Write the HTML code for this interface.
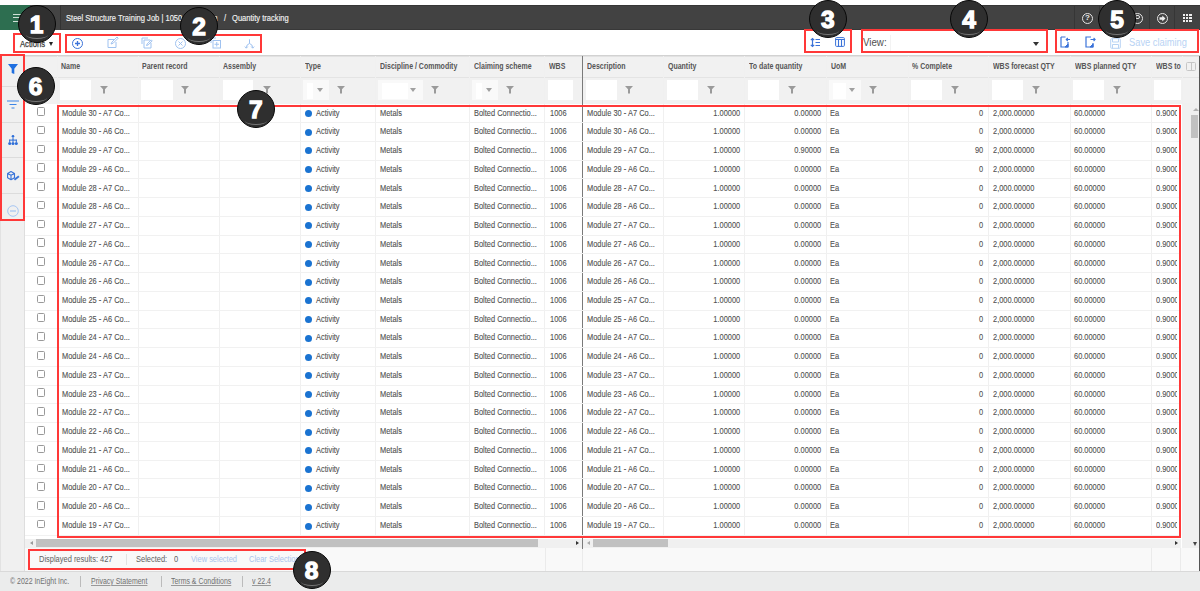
<!DOCTYPE html>
<html><head><meta charset="utf-8"><style>
html,body{margin:0;padding:0;width:1200px;height:591px;overflow:hidden;background:#fff;position:relative;font-family:"Liberation Sans",sans-serif}
div{position:absolute;box-sizing:border-box}
#top{left:0;top:5.3px;width:1200px;height:24.9px;background:#424242;border-top:1px solid #363636;border-bottom:1px solid #383838}
#logo{left:0;top:5px;width:30px;height:25px;background:#2d6e50}
#logo2{left:30px;top:5px;width:30.5px;height:25px;background:#444}
.vd{width:1px;background:#333}
#ham{left:13px;top:14px;width:8px;height:9px}
#ham i{display:block;position:relative;height:1.1px;background:#cfe0d6;margin-bottom:2.2px}
.hi{width:11px;height:11px;border:1.2px solid #e6e6e6;border-radius:50%}
.hi span{position:absolute;left:0;right:0;top:-1px;text-align:center;font:bold 8px "Liberation Sans";color:#eee}
.hi b{position:absolute;left:2px;top:2.5px;width:5px;height:4px;background:#eee}
#appgrid{left:1182.5px;top:13px;width:9px;height:9px}
#appgrid i{float:left;width:2.2px;height:2.2px;margin:0 .8px .8px 0;background:#eee}
.tt{font-size:9px;color:#f2f2f2;-webkit-text-stroke:0.15px #f2f2f2;white-space:nowrap;transform:scaleX(.84);transform-origin:0 0}
.tb{font-size:9px;color:#383838;-webkit-text-stroke:0.25px #383838;white-space:nowrap;transform:scaleX(.85);transform-origin:0 0}
.tv{font-size:11.3px;color:#505050;white-space:nowrap;transform:scaleX(.86);transform-origin:0 0}
.ts{font-size:10px;color:#b8d3f4;white-space:nowrap;transform:scaleX(.93);transform-origin:0 0}
.tri{width:0;height:0;border-left:2.5px solid transparent;border-right:2.5px solid transparent;border-top:4px solid #333}
.tri.g{border-top-color:#a0a0a0;border-left-width:3px;border-right-width:3px;border-top-width:4.3px}
.tri.l{border-top:2.5px solid transparent;border-bottom:2.5px solid transparent;border-right:3px solid #999;border-left:0}
.tri.rr{border-top:2.5px solid transparent;border-bottom:2.5px solid transparent;border-left:3px solid #333;border-right:0}
.tri.up{border-top:0;border-bottom:3px solid #b0b0b0;border-left-width:3px;border-right-width:3px}
#grid{left:25px;top:55.5px;width:1175px;height:515px;background:#fff;border-right:1.5px solid #555}
#side{left:0;top:55.5px;width:25px;height:515px;background:#f0f0f0;border-right:1px solid #dedede;border-left:1px solid #e2e2e2}
.sd{left:2px;width:21px;height:1px;background:#dcdcdc}
#hdr{left:25px;top:54.8px;width:1175px;height:49px;background:#f1f1f1;border-top:1px solid #d2d2d2;box-shadow:inset 0 1px 0 #e2e2e2}
#hdr:after{content:"";position:absolute;left:0;right:0;top:21px;height:1px;background:#e4e4e4}
.cl{width:1px;background:#f0f0f0}
#frz{left:581.5px;top:55.5px;width:1.3px;height:493px;background:#7a7a7a}
.rl{left:25px;width:1156px;height:1px;background:#f1f1f1}
.th{font-size:8.7px;font-weight:bold;color:#555;white-space:nowrap;transform:scaleX(.805);transform-origin:0 0}
.fi{top:80px;height:19.7px;background:#fff}
.fd{top:79.8px;height:20px;background:#f9f9f9}
.td{font-size:9.2px;color:#505050;-webkit-text-stroke:0.1px #505050;white-space:nowrap;transform:scaleX(.81);transform-origin:0 0}
.td.r{transform-origin:100% 0}
.cb{left:36.5px;width:8.6px;height:8.6px;border:1.1px solid #999;border-radius:1.5px;background:#fff}
.dot{left:305.2px;width:7px;height:7px;border-radius:50%;background:#1a73d1}
.hs{top:538.5px;height:9.5px;background:#f0f0f0}
.hth{top:538.8px;height:8px;background:#c1c1c1}
#vthumb{left:1190.5px;top:114.7px;width:7.5px;height:23px;background:#c1c1c1}
#rb{left:1198.5px;top:55.5px;width:1.5px;height:515px;background:#555}
.sep{width:1px;background:#e2e2e2}
.tst{font-size:9px;color:#606060;white-space:nowrap;transform:scaleX(.83);transform-origin:0 0}
#foot{left:0;top:570.7px;width:1200px;height:21px;background:#ebecec;border-top:1px solid #d9d9d9}
.tf{font-size:8.8px;color:#707070;white-space:nowrap;transform:scaleX(.79);transform-origin:0 0}
.u{text-decoration:underline;text-decoration-color:#999}
.num{width:38.0px;height:38.0px;border-radius:50%;background:#2f2f2f;border:1.6px solid #080808;z-index:10}
.num:after{content:"";position:absolute;left:7px;right:7px;bottom:2.5px;height:7px;border-radius:50%;border-bottom:1.7px solid #747474}
.num span{position:absolute;left:0;right:0;top:50%;transform:translateY(-43%);text-align:center;font:bold 24.5px "Liberation Sans",sans-serif;color:#fff;line-height:1;-webkit-text-stroke:1.3px #fff}
.rb{border:2.3px solid #ff3838;z-index:9}
</style></head><body>
<div id="top"></div><div id="logo"></div><div id="logo2"></div><div class="vd" style="left:60px;top:5px;height:25px"></div>
<div id="ham"><i></i><i></i><i></i></div>
<div class="tt" style="left:65.6px;top:12.6px;">Steel Structure Training Job | 1050</div>
<div class="tt" style="left:196px;top:12.6px;">Admin</div>
<div class="tt" style="left:223.5px;top:12.6px;">/</div>
<div class="tt" style="left:232px;top:12.6px;">Quantity tracking</div>
<div class="vd" style="left:1074px;top:5px;height:25px;background:#363636"></div>
<div class="vd" style="left:1099px;top:5px;height:25px;background:#363636"></div>
<div class="vd" style="left:1124px;top:5px;height:25px;background:#363636"></div>
<div class="vd" style="left:1149px;top:5px;height:25px;background:#363636"></div>
<div class="vd" style="left:1174px;top:5px;height:25px;background:#363636"></div>
<div class="hi" style="left:1082px;top:12.5px"><span>?</span></div>
<div class="hi" style="left:1132px;top:12.5px"></div><div style="left:1135.3px;top:14.6px;width:4.4px;height:4.4px;border:1.1px solid #e6e6e6;border-radius:50%"></div>
<div class="hi" style="left:1157px;top:12.5px"></div><svg style="position:absolute;left:1159px;top:14.5px" width="7" height="7" viewBox="0 0 7 7"><path d="M0.5 2.3h2.8V0.6L6.5 3.5 3.3 6.4V4.7H0.5z" fill="#eee"/></svg>
<div style="left:1183.0px;top:13.5px;width:2.3px;height:2.3px;background:#eee"></div><div style="left:1186.2px;top:13.5px;width:2.3px;height:2.3px;background:#eee"></div><div style="left:1189.4px;top:13.5px;width:2.3px;height:2.3px;background:#eee"></div><div style="left:1183.0px;top:16.7px;width:2.3px;height:2.3px;background:#eee"></div><div style="left:1186.2px;top:16.7px;width:2.3px;height:2.3px;background:#eee"></div><div style="left:1189.4px;top:16.7px;width:2.3px;height:2.3px;background:#eee"></div><div style="left:1183.0px;top:19.9px;width:2.3px;height:2.3px;background:#eee"></div><div style="left:1186.2px;top:19.9px;width:2.3px;height:2.3px;background:#eee"></div><div style="left:1189.4px;top:19.9px;width:2.3px;height:2.3px;background:#eee"></div>
<div class="tb" style="left:19.8px;top:38.6px;">Actions</div>
<div class="tri" style="left:49px;top:41.7px;border-left-width:2.6px;border-right-width:2.6px;border-top-width:4px;border-top-color:#222"></div>
<svg style="position:absolute;left:72px;top:37.5px;overflow:visible" width="11" height="11" viewBox="0 0 11 11" fill="none" stroke="#3b73d9" stroke-width="1"><circle cx="5.5" cy="5.5" r="5"/><path d="M5.5 3v5M3 5.5h5" stroke-width="1.3"/></svg>
<svg style="position:absolute;left:107px;top:37px;overflow:visible" width="11" height="11" viewBox="0 0 11 11" fill="none" stroke="#9fc2f0" stroke-width="1"><path d="M7 2.5H1v8h8V5"/><path d="M4 7l1-2 5-5 1.2 1.2-5 5z"/></svg>
<svg style="position:absolute;left:141px;top:37px;overflow:visible" width="11" height="11" viewBox="0 0 11 11" fill="none" stroke="#9fc2f0" stroke-width="1"><path d="M7 1H1v6"/><path d="M9 3H3v8h7V6"/><path d="M5.5 8.5l.7-1.6 4-4 1 1-4 4z"/></svg>
<svg style="position:absolute;left:174.5px;top:37.5px;overflow:visible" width="11" height="11" viewBox="0 0 11 11" fill="none" stroke="#9fc2f0" stroke-width="1"><circle cx="5.5" cy="5.5" r="5"/><path d="M3.5 3.5l4 4M7.5 3.5l-4 4"/></svg>
<svg style="position:absolute;left:209.5px;top:37px;overflow:visible" width="11" height="11" viewBox="0 0 11 11" fill="none" stroke="#9fc2f0" stroke-width="1"><path d="M6 1H1v5"/><rect x="3" y="3.5" width="7.5" height="7.5"/><path d="M6.75 5v4.5M4.5 7.25h4.5"/></svg>
<svg style="position:absolute;left:244px;top:38.5px;overflow:visible" width="11" height="10" viewBox="0 0 11 10" fill="none" stroke="#9fc2f0" stroke-width="1"><path d="M5.5 0.3v4.2M5.5 4.5Q2.3 5.5 2.3 8.8M5.5 4.5Q8.7 5.5 8.7 8.8"/><path d="M0.8 7.6l1.5 1.6 1.5-1.6M7.2 7.6l1.5 1.6 1.5-1.6"/></svg>
<svg style="position:absolute;left:810px;top:37.5px;overflow:visible" width="11" height="9" viewBox="0 0 11 9" fill="none" stroke="#3b73d9" stroke-width="1"><path d="M2.5 0.5v8M0.8 2.2l1.7-1.7 1.7 1.7M0.8 6.8l1.7 1.7 1.7-1.7M5.5 1.5h4.5M5.5 4.5h4.5M5.5 7.5h4.5" stroke-width="1.2"/></svg>
<svg style="position:absolute;left:835px;top:37px;overflow:visible" width="10" height="10" viewBox="0 0 10 10" fill="none" stroke="#3b73d9" stroke-width="1"><rect x="0.6" y="0.6" width="8.8" height="8.8" rx="1"/><path d="M0.6 2.5h8.8M3.5 2.5v7M6.5 2.5v7" stroke-width="1.1"/></svg>
<div class="tv" style="left:863.4px;top:36px;">View:</div>
<div style="left:890px;top:34.5px;width:153px;height:17px;background:#fff;border-left:1px solid #f3f3f3"></div>
<div class="tri" style="left:1033px;top:41.5px;border-top-color:#333;border-left-width:3px;border-right-width:3px;border-top-width:4.5px"></div>
<svg style="position:absolute;left:1060px;top:36px;overflow:visible" width="11" height="12" viewBox="0 0 11 12" fill="none" stroke="#3b73d9" stroke-width="1"><path d="M1 1h4.5M8 6v5H1V1" stroke-width="1.2"/><path d="M10 3.5H6.5M7.8 2L6.3 3.5 7.8 5" stroke-width="1.1"/><path d="M5 11l3-3v3z" fill="#3b73d9"/></svg>
<svg style="position:absolute;left:1085px;top:36px;overflow:visible" width="11" height="12" viewBox="0 0 11 12" fill="none" stroke="#3b73d9" stroke-width="1"><path d="M6 1H1v10h7V7" stroke-width="1.2"/><path d="M5.5 3.5H10M8.6 2l1.5 1.5-1.5 1.5" stroke-width="1.1"/><path d="M5 11l3-3v3z" fill="#3b73d9"/></svg>
<svg style="position:absolute;left:1110px;top:37.5px;overflow:visible" width="11" height="11" viewBox="0 0 11 11" fill="none" stroke="#b8d3f4" stroke-width="1"><rect x="0.7" y="0.7" width="9.6" height="9.6" rx="1"/><path d="M2.5 0.7v3.3h6V0.7M2.5 10.3V6.5h6v3.8"/></svg>
<div class="ts" style="left:1129px;top:36.5px;">Save claiming</div>
<div id="grid"></div>
<div id="side"></div>
<div id="hdr"></div>
<div style="left:1181.5px;top:103px;width:18.5px;height:445px;background:#f0f0f0"></div>
<div id="vthumb"></div>
<div class="cl" style="left:56.5px;top:55.5px;height:479.7px"></div>
<div class="cl" style="left:137.5px;top:55.5px;height:479.7px"></div>
<div class="cl" style="left:218.5px;top:55.5px;height:479.7px"></div>
<div class="cl" style="left:300.3px;top:55.5px;height:479.7px"></div>
<div class="cl" style="left:375.3px;top:55.5px;height:479.7px"></div>
<div class="cl" style="left:469.2px;top:55.5px;height:479.7px"></div>
<div class="cl" style="left:544.2px;top:55.5px;height:479.7px"></div>
<div class="cl" style="left:663.3px;top:55.5px;height:479.7px"></div>
<div class="cl" style="left:744.2px;top:55.5px;height:479.7px"></div>
<div class="cl" style="left:825.8px;top:55.5px;height:479.7px"></div>
<div class="cl" style="left:907.5px;top:55.5px;height:479.7px"></div>
<div class="cl" style="left:988.3px;top:55.5px;height:479.7px"></div>
<div class="cl" style="left:1069.7px;top:55.5px;height:479.7px"></div>
<div class="cl" style="left:1151.3px;top:55.5px;height:479.7px"></div>
<div class="cl" style="left:1181.5px;top:55.5px;height:479.7px"></div>
<div style="left:25px;top:548px;width:1174px;height:22.7px;background:#f9f9f9"></div>
<div class="cl" style="left:544.5px;top:548px;height:22.5px;background:#ebebeb"></div>
<div class="cl" style="left:582px;top:548px;height:22.5px;background:#ebebeb"></div>
<div class="cl" style="left:1151px;top:548px;height:22.5px;background:#ebebeb"></div>
<div class="cl" style="left:1179.5px;top:548px;height:22.5px;background:#ebebeb"></div>
<div id="frz"></div>
<div class="rl" style="top:122.00px"></div>
<div class="rl" style="top:140.76px"></div>
<div class="rl" style="top:159.52px"></div>
<div class="rl" style="top:178.28px"></div>
<div class="rl" style="top:197.04px"></div>
<div class="rl" style="top:215.80px"></div>
<div class="rl" style="top:234.56px"></div>
<div class="rl" style="top:253.32px"></div>
<div class="rl" style="top:272.08px"></div>
<div class="rl" style="top:290.84px"></div>
<div class="rl" style="top:309.60px"></div>
<div class="rl" style="top:328.36px"></div>
<div class="rl" style="top:347.12px"></div>
<div class="rl" style="top:365.88px"></div>
<div class="rl" style="top:384.64px"></div>
<div class="rl" style="top:403.40px"></div>
<div class="rl" style="top:422.16px"></div>
<div class="rl" style="top:440.92px"></div>
<div class="rl" style="top:459.68px"></div>
<div class="rl" style="top:478.44px"></div>
<div class="rl" style="top:497.20px"></div>
<div class="rl" style="top:515.96px"></div>
<div class="rl" style="top:534.72px"></div>
<div class="th" style="left:61.3px;top:61.3px;">Name</div>
<div class="th" style="left:142.3px;top:61.3px;">Parent record</div>
<div class="th" style="left:223.3px;top:61.3px;">Assembly</div>
<div class="th" style="left:305.1px;top:61.3px;">Type</div>
<div class="th" style="left:380.1px;top:61.3px;">Discipline / Commodity</div>
<div class="th" style="left:474.0px;top:61.3px;">Claiming scheme</div>
<div class="th" style="left:549.0px;top:61.3px;">WBS</div>
<div class="th" style="left:587.0px;top:61.3px;">Description</div>
<div class="th" style="left:668.0999999999999px;top:61.3px;">Quantity</div>
<div class="th" style="left:749.0px;top:61.3px;">To date quantity</div>
<div class="th" style="left:830.5999999999999px;top:61.3px;">UoM</div>
<div class="th" style="left:912.3px;top:61.3px;">% Complete</div>
<div class="th" style="left:993.0999999999999px;top:61.3px;">WBS forecast QTY</div>
<div class="th" style="left:1074.5px;top:61.3px;">WBS planned QTY</div>
<div class="th" style="left:1156.1px;top:61.3px;">WBS to</div>
<div style="left:1186px;top:61.9px;width:9.6px;height:9px;border:1.1px solid #c6c6c6;border-top-width:1.8px;border-radius:1.5px"><i style="position:absolute;left:3.7px;top:0;width:1px;height:7px;background:#c6c6c6"></i></div>
<div class="fi" style="left:60px;width:31px"></div><svg style="position:absolute;left:100px;top:86px" width="8" height="8" viewBox="0 0 8 8"><path d="M0 0h8L5 3.2V7.5H3V3.2z" fill="#9a9a9a"/></svg>
<div class="fi" style="left:141px;width:31.5px"></div><svg style="position:absolute;left:181px;top:86px" width="8" height="8" viewBox="0 0 8 8"><path d="M0 0h8L5 3.2V7.5H3V3.2z" fill="#9a9a9a"/></svg>
<div class="fi" style="left:222.5px;width:30.5px"></div><svg style="position:absolute;left:262.7px;top:86px" width="8" height="8" viewBox="0 0 8 8"><path d="M0 0h8L5 3.2V7.5H3V3.2z" fill="#9a9a9a"/></svg>
<div class="fd" style="left:303.3px;width:25.69999999999999px"></div><div class="fi" style="left:307.3px;width:5.699999999999989px;top:83px;height:15.5px"></div><div class="tri g" style="left:316.7px;top:88px"></div><svg style="position:absolute;left:337px;top:86px" width="8" height="8" viewBox="0 0 8 8"><path d="M0 0h8L5 3.2V7.5H3V3.2z" fill="#9a9a9a"/></svg>
<div class="fd" style="left:378px;width:44.5px"></div><div class="fi" style="left:382px;width:26px;top:83px;height:15.5px"></div><div class="tri g" style="left:410px;top:88px"></div><svg style="position:absolute;left:431px;top:86px" width="8" height="8" viewBox="0 0 8 8"><path d="M0 0h8L5 3.2V7.5H3V3.2z" fill="#9a9a9a"/></svg>
<div class="fd" style="left:471.7px;width:26.30000000000001px"></div><div class="fi" style="left:475.7px;width:6.300000000000011px;top:83px;height:15.5px"></div><div class="tri g" style="left:485.7px;top:88px"></div><svg style="position:absolute;left:506px;top:86px" width="8" height="8" viewBox="0 0 8 8"><path d="M0 0h8L5 3.2V7.5H3V3.2z" fill="#9a9a9a"/></svg>
<div class="fi" style="left:548px;width:25px"></div>
<div class="fi" style="left:585.8px;width:30.90000000000009px"></div><svg style="position:absolute;left:625px;top:86px" width="8" height="8" viewBox="0 0 8 8"><path d="M0 0h8L5 3.2V7.5H3V3.2z" fill="#9a9a9a"/></svg>
<div class="fi" style="left:666.7px;width:31.299999999999955px"></div><svg style="position:absolute;left:706.8px;top:86px" width="8" height="8" viewBox="0 0 8 8"><path d="M0 0h8L5 3.2V7.5H3V3.2z" fill="#9a9a9a"/></svg>
<div class="fi" style="left:748px;width:31px"></div><svg style="position:absolute;left:787.7px;top:86px" width="8" height="8" viewBox="0 0 8 8"><path d="M0 0h8L5 3.2V7.5H3V3.2z" fill="#9a9a9a"/></svg>
<div class="fd" style="left:829px;width:32px"></div><div class="fi" style="left:833px;width:13px;top:83px;height:15.5px"></div><div class="tri g" style="left:848.7px;top:88px"></div><svg style="position:absolute;left:869px;top:86px" width="8" height="8" viewBox="0 0 8 8"><path d="M0 0h8L5 3.2V7.5H3V3.2z" fill="#9a9a9a"/></svg>
<div class="fi" style="left:910.8px;width:30.90000000000009px"></div><svg style="position:absolute;left:950.7px;top:86px" width="8" height="8" viewBox="0 0 8 8"><path d="M0 0h8L5 3.2V7.5H3V3.2z" fill="#9a9a9a"/></svg>
<div class="fi" style="left:991.5px;width:31.5px"></div><svg style="position:absolute;left:1031.5px;top:86px" width="8" height="8" viewBox="0 0 8 8"><path d="M0 0h8L5 3.2V7.5H3V3.2z" fill="#9a9a9a"/></svg>
<div class="fi" style="left:1073px;width:31px"></div><svg style="position:absolute;left:1113px;top:86px" width="8" height="8" viewBox="0 0 8 8"><path d="M0 0h8L5 3.2V7.5H3V3.2z" fill="#9a9a9a"/></svg>
<div class="fi" style="left:1154px;width:27px"></div>
<div class="cb" style="top:107.09px"></div>
<div class="td" style="left:61.5px;top:107.64px;">Module 30 - A7 Co...</div>
<div class="dot" style="top:109.79px"></div>
<div class="td" style="left:316px;top:107.64px;">Activity</div>
<div class="td" style="left:380px;top:107.64px;">Metals</div>
<div class="td" style="left:474px;top:107.64px;">Bolted Connectio...</div>
<div class="td" style="left:549.5px;top:107.64px;">1006</div>
<div class="td" style="left:587px;top:107.64px;">Module 30 - A7 Co...</div>
<div class="td r" style="right:460px;top:107.64px">1.00000</div>
<div class="td r" style="right:379.20000000000005px;top:107.64px">0.00000</div>
<div class="td" style="left:830px;top:107.64px;">Ea</div>
<div class="td r" style="right:216.5px;top:107.64px">0</div>
<div class="td" style="left:992.5px;top:107.64px;">2,000.00000</div>
<div class="td" style="left:1074px;top:107.64px;">60.00000</div>
<div class="td" style="left:1155.5px;top:107.64px;width:25.5px;overflow:hidden">0.9000</div>
<div class="cb" style="top:125.85px"></div>
<div class="td" style="left:61.5px;top:126.38px;">Module 30 - A6 Co...</div>
<div class="dot" style="top:128.55px"></div>
<div class="td" style="left:316px;top:126.38px;">Activity</div>
<div class="td" style="left:380px;top:126.38px;">Metals</div>
<div class="td" style="left:474px;top:126.38px;">Bolted Connectio...</div>
<div class="td" style="left:549.5px;top:126.38px;">1006</div>
<div class="td" style="left:587px;top:126.38px;">Module 30 - A6 Co...</div>
<div class="td r" style="right:460px;top:126.38px">1.00000</div>
<div class="td r" style="right:379.20000000000005px;top:126.38px">0.00000</div>
<div class="td" style="left:830px;top:126.38px;">Ea</div>
<div class="td r" style="right:216.5px;top:126.38px">0</div>
<div class="td" style="left:992.5px;top:126.38px;">2,000.00000</div>
<div class="td" style="left:1074px;top:126.38px;">60.00000</div>
<div class="td" style="left:1155.5px;top:126.38px;width:25.5px;overflow:hidden">0.9000</div>
<div class="cb" style="top:144.61px"></div>
<div class="td" style="left:61.5px;top:145.11px;">Module 29 - A7 Co...</div>
<div class="dot" style="top:147.31px"></div>
<div class="td" style="left:316px;top:145.11px;">Activity</div>
<div class="td" style="left:380px;top:145.11px;">Metals</div>
<div class="td" style="left:474px;top:145.11px;">Bolted Connectio...</div>
<div class="td" style="left:549.5px;top:145.11px;">1006</div>
<div class="td" style="left:587px;top:145.11px;">Module 29 - A7 Co...</div>
<div class="td r" style="right:460px;top:145.11px">1.00000</div>
<div class="td r" style="right:379.20000000000005px;top:145.11px">0.90000</div>
<div class="td" style="left:830px;top:145.11px;">Ea</div>
<div class="td r" style="right:216.5px;top:145.11px">90</div>
<div class="td" style="left:992.5px;top:145.11px;">2,000.00000</div>
<div class="td" style="left:1074px;top:145.11px;">60.00000</div>
<div class="td" style="left:1155.5px;top:145.11px;width:25.5px;overflow:hidden">0.9000</div>
<div class="cb" style="top:163.37px"></div>
<div class="td" style="left:61.5px;top:163.84px;">Module 29 - A6 Co...</div>
<div class="dot" style="top:166.07px"></div>
<div class="td" style="left:316px;top:163.84px;">Activity</div>
<div class="td" style="left:380px;top:163.84px;">Metals</div>
<div class="td" style="left:474px;top:163.84px;">Bolted Connectio...</div>
<div class="td" style="left:549.5px;top:163.84px;">1006</div>
<div class="td" style="left:587px;top:163.84px;">Module 29 - A6 Co...</div>
<div class="td r" style="right:460px;top:163.84px">1.00000</div>
<div class="td r" style="right:379.20000000000005px;top:163.84px">0.00000</div>
<div class="td" style="left:830px;top:163.84px;">Ea</div>
<div class="td r" style="right:216.5px;top:163.84px">0</div>
<div class="td" style="left:992.5px;top:163.84px;">2,000.00000</div>
<div class="td" style="left:1074px;top:163.84px;">60.00000</div>
<div class="td" style="left:1155.5px;top:163.84px;width:25.5px;overflow:hidden">0.9000</div>
<div class="cb" style="top:182.13px"></div>
<div class="td" style="left:61.5px;top:182.58px;">Module 28 - A7 Co...</div>
<div class="dot" style="top:184.83px"></div>
<div class="td" style="left:316px;top:182.58px;">Activity</div>
<div class="td" style="left:380px;top:182.58px;">Metals</div>
<div class="td" style="left:474px;top:182.58px;">Bolted Connectio...</div>
<div class="td" style="left:549.5px;top:182.58px;">1006</div>
<div class="td" style="left:587px;top:182.58px;">Module 28 - A7 Co...</div>
<div class="td r" style="right:460px;top:182.58px">1.00000</div>
<div class="td r" style="right:379.20000000000005px;top:182.58px">0.00000</div>
<div class="td" style="left:830px;top:182.58px;">Ea</div>
<div class="td r" style="right:216.5px;top:182.58px">0</div>
<div class="td" style="left:992.5px;top:182.58px;">2,000.00000</div>
<div class="td" style="left:1074px;top:182.58px;">60.00000</div>
<div class="td" style="left:1155.5px;top:182.58px;width:25.5px;overflow:hidden">0.9000</div>
<div class="cb" style="top:200.89px"></div>
<div class="td" style="left:61.5px;top:201.31px;">Module 28 - A6 Co...</div>
<div class="dot" style="top:203.59px"></div>
<div class="td" style="left:316px;top:201.31px;">Activity</div>
<div class="td" style="left:380px;top:201.31px;">Metals</div>
<div class="td" style="left:474px;top:201.31px;">Bolted Connectio...</div>
<div class="td" style="left:549.5px;top:201.31px;">1006</div>
<div class="td" style="left:587px;top:201.31px;">Module 28 - A6 Co...</div>
<div class="td r" style="right:460px;top:201.31px">1.00000</div>
<div class="td r" style="right:379.20000000000005px;top:201.31px">0.00000</div>
<div class="td" style="left:830px;top:201.31px;">Ea</div>
<div class="td r" style="right:216.5px;top:201.31px">0</div>
<div class="td" style="left:992.5px;top:201.31px;">2,000.00000</div>
<div class="td" style="left:1074px;top:201.31px;">60.00000</div>
<div class="td" style="left:1155.5px;top:201.31px;width:25.5px;overflow:hidden">0.9000</div>
<div class="cb" style="top:219.65px"></div>
<div class="td" style="left:61.5px;top:220.05px;">Module 27 - A7 Co...</div>
<div class="dot" style="top:222.35px"></div>
<div class="td" style="left:316px;top:220.05px;">Activity</div>
<div class="td" style="left:380px;top:220.05px;">Metals</div>
<div class="td" style="left:474px;top:220.05px;">Bolted Connectio...</div>
<div class="td" style="left:549.5px;top:220.05px;">1006</div>
<div class="td" style="left:587px;top:220.05px;">Module 27 - A7 Co...</div>
<div class="td r" style="right:460px;top:220.05px">1.00000</div>
<div class="td r" style="right:379.20000000000005px;top:220.05px">0.00000</div>
<div class="td" style="left:830px;top:220.05px;">Ea</div>
<div class="td r" style="right:216.5px;top:220.05px">0</div>
<div class="td" style="left:992.5px;top:220.05px;">2,000.00000</div>
<div class="td" style="left:1074px;top:220.05px;">60.00000</div>
<div class="td" style="left:1155.5px;top:220.05px;width:25.5px;overflow:hidden">0.9000</div>
<div class="cb" style="top:238.41px"></div>
<div class="td" style="left:61.5px;top:238.78px;">Module 27 - A6 Co...</div>
<div class="dot" style="top:241.11px"></div>
<div class="td" style="left:316px;top:238.78px;">Activity</div>
<div class="td" style="left:380px;top:238.78px;">Metals</div>
<div class="td" style="left:474px;top:238.78px;">Bolted Connectio...</div>
<div class="td" style="left:549.5px;top:238.78px;">1006</div>
<div class="td" style="left:587px;top:238.78px;">Module 27 - A6 Co...</div>
<div class="td r" style="right:460px;top:238.78px">1.00000</div>
<div class="td r" style="right:379.20000000000005px;top:238.78px">0.00000</div>
<div class="td" style="left:830px;top:238.78px;">Ea</div>
<div class="td r" style="right:216.5px;top:238.78px">0</div>
<div class="td" style="left:992.5px;top:238.78px;">2,000.00000</div>
<div class="td" style="left:1074px;top:238.78px;">60.00000</div>
<div class="td" style="left:1155.5px;top:238.78px;width:25.5px;overflow:hidden">0.9000</div>
<div class="cb" style="top:257.17px"></div>
<div class="td" style="left:61.5px;top:257.52px;">Module 26 - A7 Co...</div>
<div class="dot" style="top:259.87px"></div>
<div class="td" style="left:316px;top:257.52px;">Activity</div>
<div class="td" style="left:380px;top:257.52px;">Metals</div>
<div class="td" style="left:474px;top:257.52px;">Bolted Connectio...</div>
<div class="td" style="left:549.5px;top:257.52px;">1006</div>
<div class="td" style="left:587px;top:257.52px;">Module 26 - A7 Co...</div>
<div class="td r" style="right:460px;top:257.52px">1.00000</div>
<div class="td r" style="right:379.20000000000005px;top:257.52px">0.00000</div>
<div class="td" style="left:830px;top:257.52px;">Ea</div>
<div class="td r" style="right:216.5px;top:257.52px">0</div>
<div class="td" style="left:992.5px;top:257.52px;">2,000.00000</div>
<div class="td" style="left:1074px;top:257.52px;">60.00000</div>
<div class="td" style="left:1155.5px;top:257.52px;width:25.5px;overflow:hidden">0.9000</div>
<div class="cb" style="top:275.93px"></div>
<div class="td" style="left:61.5px;top:276.25px;">Module 26 - A6 Co...</div>
<div class="dot" style="top:278.63px"></div>
<div class="td" style="left:316px;top:276.25px;">Activity</div>
<div class="td" style="left:380px;top:276.25px;">Metals</div>
<div class="td" style="left:474px;top:276.25px;">Bolted Connectio...</div>
<div class="td" style="left:549.5px;top:276.25px;">1006</div>
<div class="td" style="left:587px;top:276.25px;">Module 26 - A6 Co...</div>
<div class="td r" style="right:460px;top:276.25px">1.00000</div>
<div class="td r" style="right:379.20000000000005px;top:276.25px">0.00000</div>
<div class="td" style="left:830px;top:276.25px;">Ea</div>
<div class="td r" style="right:216.5px;top:276.25px">0</div>
<div class="td" style="left:992.5px;top:276.25px;">2,000.00000</div>
<div class="td" style="left:1074px;top:276.25px;">60.00000</div>
<div class="td" style="left:1155.5px;top:276.25px;width:25.5px;overflow:hidden">0.9000</div>
<div class="cb" style="top:294.69px"></div>
<div class="td" style="left:61.5px;top:294.99px;">Module 25 - A7 Co...</div>
<div class="dot" style="top:297.39px"></div>
<div class="td" style="left:316px;top:294.99px;">Activity</div>
<div class="td" style="left:380px;top:294.99px;">Metals</div>
<div class="td" style="left:474px;top:294.99px;">Bolted Connectio...</div>
<div class="td" style="left:549.5px;top:294.99px;">1006</div>
<div class="td" style="left:587px;top:294.99px;">Module 25 - A7 Co...</div>
<div class="td r" style="right:460px;top:294.99px">1.00000</div>
<div class="td r" style="right:379.20000000000005px;top:294.99px">0.00000</div>
<div class="td" style="left:830px;top:294.99px;">Ea</div>
<div class="td r" style="right:216.5px;top:294.99px">0</div>
<div class="td" style="left:992.5px;top:294.99px;">2,000.00000</div>
<div class="td" style="left:1074px;top:294.99px;">60.00000</div>
<div class="td" style="left:1155.5px;top:294.99px;width:25.5px;overflow:hidden">0.9000</div>
<div class="cb" style="top:313.45px"></div>
<div class="td" style="left:61.5px;top:313.72px;">Module 25 - A6 Co...</div>
<div class="dot" style="top:316.15px"></div>
<div class="td" style="left:316px;top:313.72px;">Activity</div>
<div class="td" style="left:380px;top:313.72px;">Metals</div>
<div class="td" style="left:474px;top:313.72px;">Bolted Connectio...</div>
<div class="td" style="left:549.5px;top:313.72px;">1006</div>
<div class="td" style="left:587px;top:313.72px;">Module 25 - A6 Co...</div>
<div class="td r" style="right:460px;top:313.72px">1.00000</div>
<div class="td r" style="right:379.20000000000005px;top:313.72px">0.00000</div>
<div class="td" style="left:830px;top:313.72px;">Ea</div>
<div class="td r" style="right:216.5px;top:313.72px">0</div>
<div class="td" style="left:992.5px;top:313.72px;">2,000.00000</div>
<div class="td" style="left:1074px;top:313.72px;">60.00000</div>
<div class="td" style="left:1155.5px;top:313.72px;width:25.5px;overflow:hidden">0.9000</div>
<div class="cb" style="top:332.21px"></div>
<div class="td" style="left:61.5px;top:332.46px;">Module 24 - A7 Co...</div>
<div class="dot" style="top:334.91px"></div>
<div class="td" style="left:316px;top:332.46px;">Activity</div>
<div class="td" style="left:380px;top:332.46px;">Metals</div>
<div class="td" style="left:474px;top:332.46px;">Bolted Connectio...</div>
<div class="td" style="left:549.5px;top:332.46px;">1006</div>
<div class="td" style="left:587px;top:332.46px;">Module 24 - A7 Co...</div>
<div class="td r" style="right:460px;top:332.46px">1.00000</div>
<div class="td r" style="right:379.20000000000005px;top:332.46px">0.00000</div>
<div class="td" style="left:830px;top:332.46px;">Ea</div>
<div class="td r" style="right:216.5px;top:332.46px">0</div>
<div class="td" style="left:992.5px;top:332.46px;">2,000.00000</div>
<div class="td" style="left:1074px;top:332.46px;">60.00000</div>
<div class="td" style="left:1155.5px;top:332.46px;width:25.5px;overflow:hidden">0.9000</div>
<div class="cb" style="top:350.97px"></div>
<div class="td" style="left:61.5px;top:351.19px;">Module 24 - A6 Co...</div>
<div class="dot" style="top:353.67px"></div>
<div class="td" style="left:316px;top:351.19px;">Activity</div>
<div class="td" style="left:380px;top:351.19px;">Metals</div>
<div class="td" style="left:474px;top:351.19px;">Bolted Connectio...</div>
<div class="td" style="left:549.5px;top:351.19px;">1006</div>
<div class="td" style="left:587px;top:351.19px;">Module 24 - A6 Co...</div>
<div class="td r" style="right:460px;top:351.19px">1.00000</div>
<div class="td r" style="right:379.20000000000005px;top:351.19px">0.00000</div>
<div class="td" style="left:830px;top:351.19px;">Ea</div>
<div class="td r" style="right:216.5px;top:351.19px">0</div>
<div class="td" style="left:992.5px;top:351.19px;">2,000.00000</div>
<div class="td" style="left:1074px;top:351.19px;">60.00000</div>
<div class="td" style="left:1155.5px;top:351.19px;width:25.5px;overflow:hidden">0.9000</div>
<div class="cb" style="top:369.73px"></div>
<div class="td" style="left:61.5px;top:369.93px;">Module 23 - A7 Co...</div>
<div class="dot" style="top:372.43px"></div>
<div class="td" style="left:316px;top:369.93px;">Activity</div>
<div class="td" style="left:380px;top:369.93px;">Metals</div>
<div class="td" style="left:474px;top:369.93px;">Bolted Connectio...</div>
<div class="td" style="left:549.5px;top:369.93px;">1006</div>
<div class="td" style="left:587px;top:369.93px;">Module 23 - A7 Co...</div>
<div class="td r" style="right:460px;top:369.93px">1.00000</div>
<div class="td r" style="right:379.20000000000005px;top:369.93px">0.00000</div>
<div class="td" style="left:830px;top:369.93px;">Ea</div>
<div class="td r" style="right:216.5px;top:369.93px">0</div>
<div class="td" style="left:992.5px;top:369.93px;">2,000.00000</div>
<div class="td" style="left:1074px;top:369.93px;">60.00000</div>
<div class="td" style="left:1155.5px;top:369.93px;width:25.5px;overflow:hidden">0.9000</div>
<div class="cb" style="top:388.49px"></div>
<div class="td" style="left:61.5px;top:388.66px;">Module 23 - A6 Co...</div>
<div class="dot" style="top:391.19px"></div>
<div class="td" style="left:316px;top:388.66px;">Activity</div>
<div class="td" style="left:380px;top:388.66px;">Metals</div>
<div class="td" style="left:474px;top:388.66px;">Bolted Connectio...</div>
<div class="td" style="left:549.5px;top:388.66px;">1006</div>
<div class="td" style="left:587px;top:388.66px;">Module 23 - A6 Co...</div>
<div class="td r" style="right:460px;top:388.66px">1.00000</div>
<div class="td r" style="right:379.20000000000005px;top:388.66px">0.00000</div>
<div class="td" style="left:830px;top:388.66px;">Ea</div>
<div class="td r" style="right:216.5px;top:388.66px">0</div>
<div class="td" style="left:992.5px;top:388.66px;">2,000.00000</div>
<div class="td" style="left:1074px;top:388.66px;">60.00000</div>
<div class="td" style="left:1155.5px;top:388.66px;width:25.5px;overflow:hidden">0.9000</div>
<div class="cb" style="top:407.25px"></div>
<div class="td" style="left:61.5px;top:407.4px;">Module 22 - A7 Co...</div>
<div class="dot" style="top:409.95px"></div>
<div class="td" style="left:316px;top:407.4px;">Activity</div>
<div class="td" style="left:380px;top:407.4px;">Metals</div>
<div class="td" style="left:474px;top:407.4px;">Bolted Connectio...</div>
<div class="td" style="left:549.5px;top:407.4px;">1006</div>
<div class="td" style="left:587px;top:407.4px;">Module 22 - A7 Co...</div>
<div class="td r" style="right:460px;top:407.4px">1.00000</div>
<div class="td r" style="right:379.20000000000005px;top:407.4px">0.00000</div>
<div class="td" style="left:830px;top:407.4px;">Ea</div>
<div class="td r" style="right:216.5px;top:407.4px">0</div>
<div class="td" style="left:992.5px;top:407.4px;">2,000.00000</div>
<div class="td" style="left:1074px;top:407.4px;">60.00000</div>
<div class="td" style="left:1155.5px;top:407.4px;width:25.5px;overflow:hidden">0.9000</div>
<div class="cb" style="top:426.01px"></div>
<div class="td" style="left:61.5px;top:426.13px;">Module 22 - A6 Co...</div>
<div class="dot" style="top:428.71px"></div>
<div class="td" style="left:316px;top:426.13px;">Activity</div>
<div class="td" style="left:380px;top:426.13px;">Metals</div>
<div class="td" style="left:474px;top:426.13px;">Bolted Connectio...</div>
<div class="td" style="left:549.5px;top:426.13px;">1006</div>
<div class="td" style="left:587px;top:426.13px;">Module 22 - A6 Co...</div>
<div class="td r" style="right:460px;top:426.13px">1.00000</div>
<div class="td r" style="right:379.20000000000005px;top:426.13px">0.00000</div>
<div class="td" style="left:830px;top:426.13px;">Ea</div>
<div class="td r" style="right:216.5px;top:426.13px">0</div>
<div class="td" style="left:992.5px;top:426.13px;">2,000.00000</div>
<div class="td" style="left:1074px;top:426.13px;">60.00000</div>
<div class="td" style="left:1155.5px;top:426.13px;width:25.5px;overflow:hidden">0.9000</div>
<div class="cb" style="top:444.77px"></div>
<div class="td" style="left:61.5px;top:444.87px;">Module 21 - A7 Co...</div>
<div class="dot" style="top:447.47px"></div>
<div class="td" style="left:316px;top:444.87px;">Activity</div>
<div class="td" style="left:380px;top:444.87px;">Metals</div>
<div class="td" style="left:474px;top:444.87px;">Bolted Connectio...</div>
<div class="td" style="left:549.5px;top:444.87px;">1006</div>
<div class="td" style="left:587px;top:444.87px;">Module 21 - A7 Co...</div>
<div class="td r" style="right:460px;top:444.87px">1.00000</div>
<div class="td r" style="right:379.20000000000005px;top:444.87px">0.00000</div>
<div class="td" style="left:830px;top:444.87px;">Ea</div>
<div class="td r" style="right:216.5px;top:444.87px">0</div>
<div class="td" style="left:992.5px;top:444.87px;">2,000.00000</div>
<div class="td" style="left:1074px;top:444.87px;">60.00000</div>
<div class="td" style="left:1155.5px;top:444.87px;width:25.5px;overflow:hidden">0.9000</div>
<div class="cb" style="top:463.53px"></div>
<div class="td" style="left:61.5px;top:463.6px;">Module 21 - A6 Co...</div>
<div class="dot" style="top:466.23px"></div>
<div class="td" style="left:316px;top:463.6px;">Activity</div>
<div class="td" style="left:380px;top:463.6px;">Metals</div>
<div class="td" style="left:474px;top:463.6px;">Bolted Connectio...</div>
<div class="td" style="left:549.5px;top:463.6px;">1006</div>
<div class="td" style="left:587px;top:463.6px;">Module 21 - A6 Co...</div>
<div class="td r" style="right:460px;top:463.6px">1.00000</div>
<div class="td r" style="right:379.20000000000005px;top:463.6px">0.00000</div>
<div class="td" style="left:830px;top:463.6px;">Ea</div>
<div class="td r" style="right:216.5px;top:463.6px">0</div>
<div class="td" style="left:992.5px;top:463.6px;">2,000.00000</div>
<div class="td" style="left:1074px;top:463.6px;">60.00000</div>
<div class="td" style="left:1155.5px;top:463.6px;width:25.5px;overflow:hidden">0.9000</div>
<div class="cb" style="top:482.29px"></div>
<div class="td" style="left:61.5px;top:482.34px;">Module 20 - A7 Co...</div>
<div class="dot" style="top:484.99px"></div>
<div class="td" style="left:316px;top:482.34px;">Activity</div>
<div class="td" style="left:380px;top:482.34px;">Metals</div>
<div class="td" style="left:474px;top:482.34px;">Bolted Connectio...</div>
<div class="td" style="left:549.5px;top:482.34px;">1006</div>
<div class="td" style="left:587px;top:482.34px;">Module 20 - A7 Co...</div>
<div class="td r" style="right:460px;top:482.34px">1.00000</div>
<div class="td r" style="right:379.20000000000005px;top:482.34px">0.00000</div>
<div class="td" style="left:830px;top:482.34px;">Ea</div>
<div class="td r" style="right:216.5px;top:482.34px">0</div>
<div class="td" style="left:992.5px;top:482.34px;">2,000.00000</div>
<div class="td" style="left:1074px;top:482.34px;">60.00000</div>
<div class="td" style="left:1155.5px;top:482.34px;width:25.5px;overflow:hidden">0.9000</div>
<div class="cb" style="top:501.05px"></div>
<div class="td" style="left:61.5px;top:501.07px;">Module 20 - A6 Co...</div>
<div class="dot" style="top:503.75px"></div>
<div class="td" style="left:316px;top:501.07px;">Activity</div>
<div class="td" style="left:380px;top:501.07px;">Metals</div>
<div class="td" style="left:474px;top:501.07px;">Bolted Connectio...</div>
<div class="td" style="left:549.5px;top:501.07px;">1006</div>
<div class="td" style="left:587px;top:501.07px;">Module 20 - A6 Co...</div>
<div class="td r" style="right:460px;top:501.07px">1.00000</div>
<div class="td r" style="right:379.20000000000005px;top:501.07px">0.00000</div>
<div class="td" style="left:830px;top:501.07px;">Ea</div>
<div class="td r" style="right:216.5px;top:501.07px">0</div>
<div class="td" style="left:992.5px;top:501.07px;">2,000.00000</div>
<div class="td" style="left:1074px;top:501.07px;">60.00000</div>
<div class="td" style="left:1155.5px;top:501.07px;width:25.5px;overflow:hidden">0.9000</div>
<div class="cb" style="top:519.81px"></div>
<div class="td" style="left:61.5px;top:519.81px;">Module 19 - A7 Co...</div>
<div class="dot" style="top:522.51px"></div>
<div class="td" style="left:316px;top:519.81px;">Activity</div>
<div class="td" style="left:380px;top:519.81px;">Metals</div>
<div class="td" style="left:474px;top:519.81px;">Bolted Connectio...</div>
<div class="td" style="left:549.5px;top:519.81px;">1006</div>
<div class="td" style="left:587px;top:519.81px;">Module 19 - A7 Co...</div>
<div class="td r" style="right:460px;top:519.81px">1.00000</div>
<div class="td r" style="right:379.20000000000005px;top:519.81px">0.00000</div>
<div class="td" style="left:830px;top:519.81px;">Ea</div>
<div class="td r" style="right:216.5px;top:519.81px">0</div>
<div class="td" style="left:992.5px;top:519.81px;">2,000.00000</div>
<div class="td" style="left:1074px;top:519.81px;">60.00000</div>
<div class="td" style="left:1155.5px;top:519.81px;width:25.5px;overflow:hidden">0.9000</div>
<div class="hs" style="left:25px;width:557px"></div>
<div class="hs" style="left:583px;width:598px"></div>
<div class="hth" style="left:36px;width:501.5px"></div>
<div class="hth" style="left:593px;width:75px"></div>
<div class="tri l" style="left:29.5px;top:540.5px"></div>
<div class="tri rr" style="left:575.5px;top:540.5px"></div>
<div class="tri l" style="left:586.5px;top:540.5px;border-right-color:#aaa"></div>
<div class="tri rr" style="left:1174.5px;top:540.5px"></div>
<div class="tri" style="left:1192.5px;top:541.5px;border-top-color:#444"></div>
<div class="tri up" style="left:1192.5px;top:107.5px"></div>
<div id="rb"></div>
<div class="sep" style="left:125.5px;top:554px;height:11px"></div>
<div class="tst" style="left:39px;top:553.8px;">Displayed results: 427</div>
<div class="tst" style="left:136px;top:553.8px;">Selected:</div>
<div class="tst" style="left:173.5px;top:553.8px;">0</div>
<div class="tst" style="left:190.8px;top:553.8px;color:#a9c4ec">View selected</div>
<div class="tst" style="left:249px;top:553.8px;color:#a9c4ec">Clear Selection</div>
<div id="foot"></div>
<div class="tf" style="left:10px;top:576.3px;">© 2022 InEight Inc.</div>
<div class="sep" style="left:80px;top:575.5px;height:11px;background:#bbb"></div>
<div class="tf u" style="left:90.6px;top:576.3px;">Privacy Statement</div>
<div class="sep" style="left:160.7px;top:575.5px;height:11px;background:#bbb"></div>
<div class="tf u" style="left:171px;top:576.3px;">Terms &amp; Conditions</div>
<div class="sep" style="left:241.7px;top:575.5px;height:11px;background:#bbb"></div>
<div class="tf u" style="left:251.7px;top:576.3px;">v 22.4</div>
<svg style="position:absolute;left:8px;top:63.8px" width="10" height="10" viewBox="0 0 10 10"><path d="M0 0h10L6.3 4.8V10L3.7 9V4.8z" fill="#1f6fe0"/></svg>
<div class="sd" style="top:86px"></div><div class="sd" style="top:122px"></div><div class="sd" style="top:157px"></div><div class="sd" style="top:192.6px"></div>
<svg style="position:absolute;left:7px;top:99.5px" width="12" height="10" viewBox="0 0 12 10" stroke="#3b84e6" stroke-width="1.2"><path d="M0 1h12M2.5 4.5h7M4.5 8h3"/></svg>
<svg style="position:absolute;left:8px;top:135px" width="10" height="10" viewBox="0 0 10 10" fill="#2f6fd8"><circle cx="5" cy="1.3" r="1.3"/><rect x="4.5" y="2.5" width="1" height="2.5"/><rect x="1.2" y="4.6" width="7.6" height="1"/><rect x="1.2" y="4.6" width="1" height="2.5"/><rect x="7.8" y="4.6" width="1" height="2.5"/><rect x="4.5" y="4.6" width="1" height="2.5"/><circle cx="1.7" cy="8.4" r="1.5"/><circle cx="5" cy="8.4" r="1.5"/><circle cx="8.3" cy="8.4" r="1.5"/></svg>
<svg style="position:absolute;left:6.5px;top:170.5px" width="14" height="10" viewBox="0 0 14 10" fill="none" stroke="#3a74d8" stroke-width="1.1" stroke-linejoin="round"><path d="M4 0.6L7.5 2.4V6.8L4 8.8L0.6 6.8V2.4z M0.6 2.4L4 4.3L7.5 2.4 M4 4.3V8.8"/><path d="M7.4 8.8L11.9 5.2" stroke-width="1.9"/></svg>
<svg style="position:absolute;left:7px;top:205px" width="12" height="12" viewBox="0 0 12 12" fill="none" stroke="#a8c6f2" stroke-width="1"><circle cx="6" cy="6" r="5.3"/><path d="M3 6h6" stroke-width="1.3"/></svg>
<div class="rb" style="left:12.9px;top:33.4px;width:47.800000000000004px;height:19.9px"></div>
<div class="rb" style="left:64.9px;top:33.6px;width:197.4px;height:19.299999999999997px"></div>
<div class="rb" style="left:804.1px;top:29.3px;width:47.69999999999993px;height:23.3px"></div>
<div class="rb" style="left:861px;top:29.3px;width:186.79999999999995px;height:24.099999999999998px"></div>
<div class="rb" style="left:1055.2px;top:29.2px;width:144.0999999999999px;height:24.099999999999998px"></div>
<div class="rb" style="left:0px;top:54.4px;width:24.9px;height:166.29999999999998px"></div>
<div class="rb" style="left:57px;top:104.8px;width:1124.3px;height:432.90000000000003px"></div>
<div class="rb" style="left:28px;top:548.7px;width:277.8px;height:21.299999999999955px"></div>
<div class="num" style="left:17.7px;top:4.8px"><span>1</span></div>
<div class="num" style="left:180.0px;top:7.2px"><span>2</span></div>
<div class="num" style="left:808.9px;top:0.4px"><span>3</span></div>
<div class="num" style="left:950.0px;top:0.2px"><span>4</span></div>
<div class="num" style="left:1098.0px;top:0.2px"><span>5</span></div>
<div class="num" style="left:16.5px;top:67.0px"><span>6</span></div>
<div class="num" style="left:236.9px;top:90.4px"><span>7</span></div>
<div class="num" style="left:292.7px;top:551.0px"><span>8</span></div>
</body></html>
